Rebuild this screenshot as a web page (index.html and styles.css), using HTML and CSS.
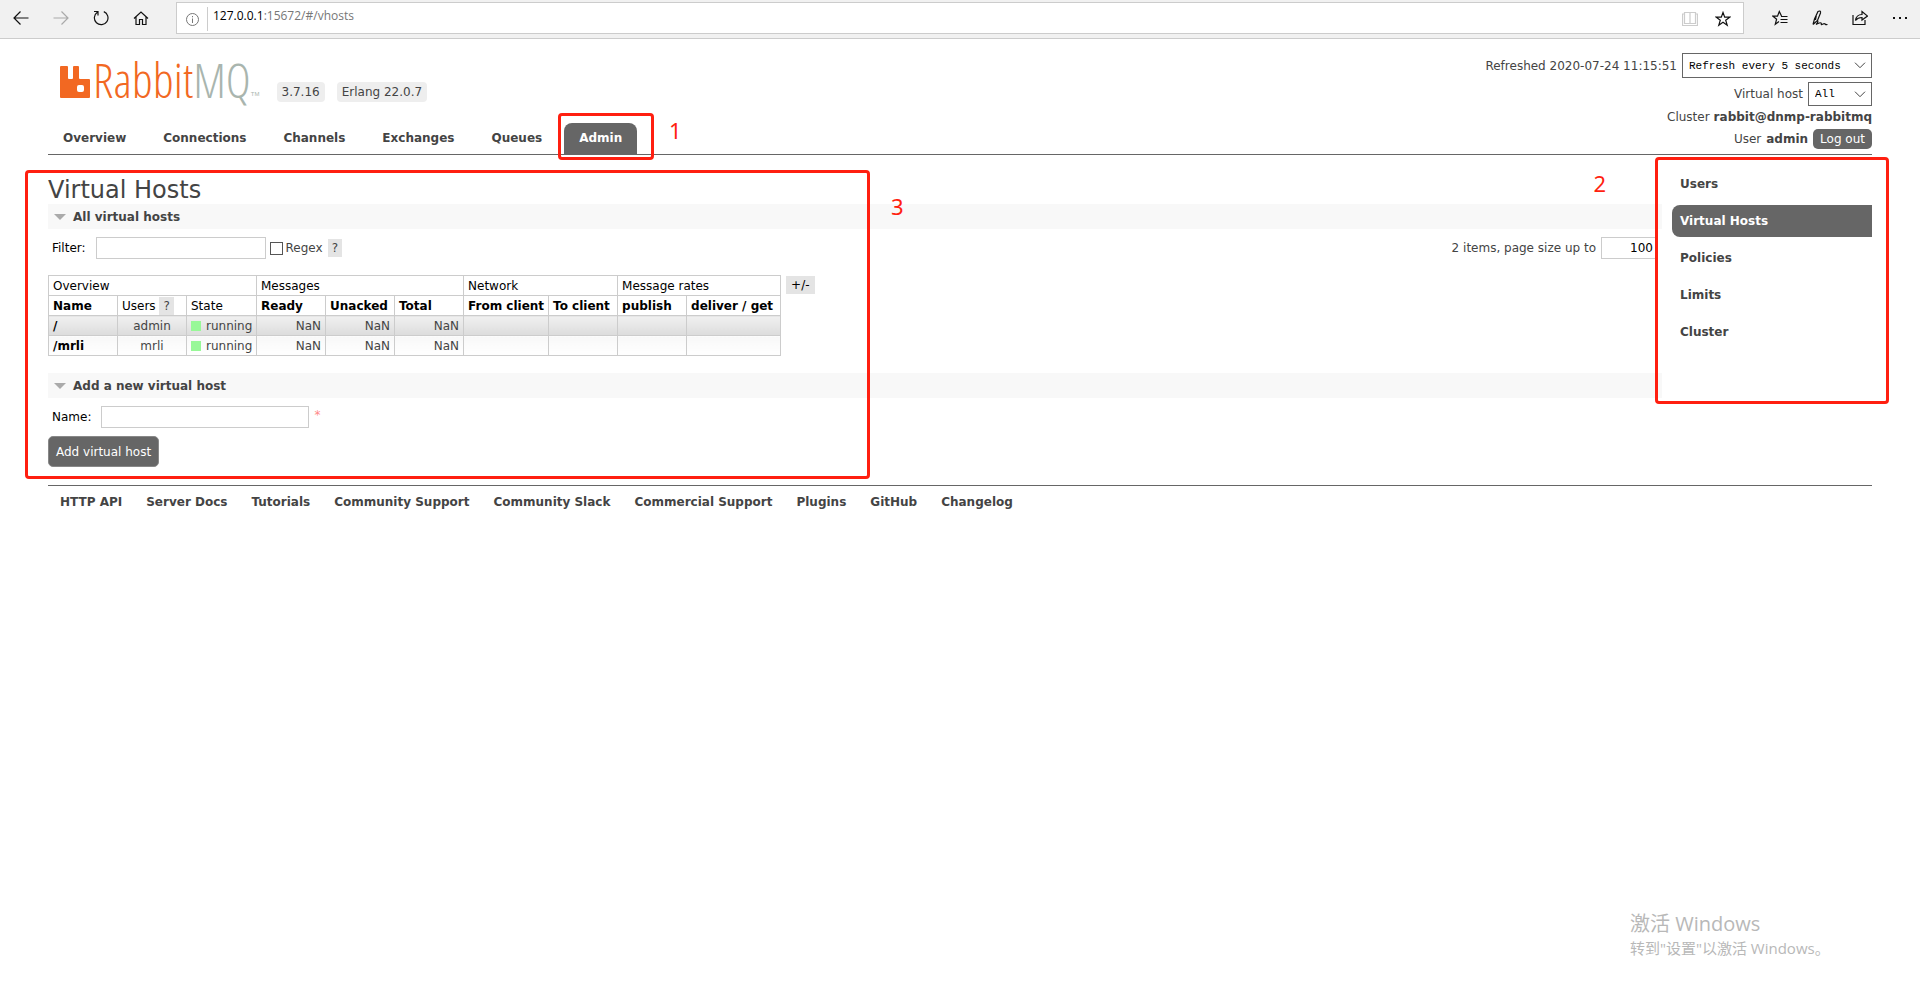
FILE: index.html
```html
<!DOCTYPE html>
<html lang="en">
<head>
<meta charset="utf-8">
<title>RabbitMQ Management</title>
<link rel="stylesheet" href="styles.css">
</head>
<body>
<div class="browser">
  <div class="browser-nav">
    <button class="icon-btn" aria-label="Back"><svg width="16" height="16" viewBox="0 0 16 16"><path d="M15.500 8H1M7.500 1.500L1 8l6.500 6.500"/></svg></button>
    <button class="icon-btn faded" aria-label="Forward"><svg width="16" height="16" viewBox="0 0 16 16"><path d="M.5 8H15M8.500 1.500L15 8l-6.500 6.500"/></svg></button>
    <button class="icon-btn" aria-label="Refresh"><svg width="16" height="16" viewBox="0 0 16 16"><path d="M10.800 1.600A6.800 6.800 0 1 1 4.300 2.300M1 1.500h4v4"/></svg></button>
    <button class="icon-btn" aria-label="Home"><svg width="16" height="16" viewBox="0 0 16 16"><path d="M1 8.500L8 2l7 6.500M3 7v7.500h3.500V9.500h3v5H13V7"/></svg></button>
  </div>
  <div class="address">
    <svg class="info" width="13" height="13" viewBox="0 0 13 13"><circle cx="6.500" cy="6.500" r="6"/><path d="M6.500 5.500v4.500M6.500 3v1.300"/></svg>
    <div class="url"><b>127.0.0.1</b>:15672/#/vhosts</div>
    <button class="icon-btn pale" aria-label="Reading view"><svg width="16" height="16" viewBox="0 0 16 16"><path d="M2.500 1.500h5.500v11H2.500zM8 1.500h5.500v11H8zM2.500 3H.5v11.500h15V3h-2"/></svg></button>
    <button class="icon-btn" aria-label="Add to favorites"><svg width="16" height="16" viewBox="0 0 16 16"><path d="M8 1.500l1.700 4.700h5L10.700 9.200l1.500 5L8 11.200l-4.200 3 1.500-5L1.300 6.200h5z"/></svg></button>
  </div>
  <div class="browser-tools">
    <button class="icon-btn" aria-label="Favorites"><svg width="16" height="16" viewBox="0 0 16 16"><path d="M9.500 6L7.300 1.500 5.500 6.200H1L4.600 9.200l-1.300 5L7 11.500M9 6.500h6.500M8.500 9.500h7M8.500 12.500h7"/></svg></button>
    <button class="icon-btn" aria-label="Notes"><svg width="16" height="16" viewBox="0 0 16 16"><path d="M1 14.500L2.500 9 6 1.500C7.500.5 9 1 8.500 3L5.500 10.500 1 14.500M4.500 4.500L3.500 10M5.500 10.500c1 .5 0 3-1.500 4 2.500-1 4-2.500 5-1.500s-.5 2 1 1.500 2-1.500 3-.5 1.500.8 2.500.5"/></svg></button>
    <button class="icon-btn" aria-label="Share"><svg width="16" height="16" viewBox="0 0 16 16"><path d="M1 5v9.500h12V10M3.500 10.500C4 7 6.500 4.500 10 4.500V1.500L15.500 6 10 10V7.500C7 7.500 5 8.500 3.500 10.500z"/></svg></button>
    <button class="icon-btn" aria-label="More"><svg width="16" height="16" viewBox="0 0 16 16"><path class="dots" d="M1 7h2v2H1zM7 7h2v2H7zM13 7h2v2h-2z"/></svg></button>
  </div>
</div>

<div class="page">
  <header class="header">
    <div class="brand-nav">
      <div class="brand">
        <a class="logo" href="#/" aria-label="RabbitMQ">
          <svg width="30" height="33" viewBox="0 0 30 33"><path fill-rule="evenodd" fill="#f26822" d="M1 1h6q1 0 1 1v11q0 1 1 1h3q1 0 1-1V2q0-1 1-1h4q1 0 1 1v11q0 1 1 1h9q1 0 1 1v17q0 1-1 1H1q-1 0-1-1V2q0-1 1-1zM19 20q-2 0-2 2v3q0 2 2 2h3q2 0 2-2v-3q0-2-2-2z"/></svg>
          <span class="wordmark">Rabbit<span class="mq">MQ</span></span><span class="tm">TM</span>
        </a>
        <span class="version">3.7.16</span>
        <span class="version">Erlang 22.0.7</span>
      </div>
      <nav class="tabs">
        <a href="#/">Overview</a>
        <a href="#/connections">Connections</a>
        <a href="#/channels">Channels</a>
        <a href="#/exchanges">Exchanges</a>
        <a href="#/queues">Queues</a>
        <a class="selected" href="#/users">Admin</a>
      </nav>
    </div>
    <div class="status">
      <div class="status-row"><label for="refresh">Refreshed 2020-07-24 11:15:51</label><select id="refresh" class="select-refresh"><option>Refresh every 5 seconds</option></select></div>
      <div class="status-row"><label for="vhost">Virtual host</label><select id="vhost" class="select-vhost"><option>All</option></select></div>
      <div class="status-row cluster">Cluster <b>rabbit@dnmp-rabbitmq</b></div>
      <div class="status-row">User <b>admin</b><button class="logout">Log out</button></div>
    </div>
  </header>

  <div class="columns">
    <main class="main">
      <h1>Virtual Hosts</h1>
      <h2>All virtual hosts</h2>
      <div class="filter">
        <label class="field-label" for="filter">Filter:</label>
        <input id="filter" class="text filter-input" type="text">
        <input id="regex" class="check" type="checkbox"><label for="regex">Regex</label>
        <button class="help">?</button>
        <div class="paging"><label for="size">2 items, page size up to</label><input id="size" class="text size-input" type="text" value="100"></div>
      </div>
      <div class="table-row">
        <table class="list">
          <colgroup><col class="c"><col class="c"><col class="c-state"><col class="c"><col class="c"><col class="c"><col class="c-from"><col class="c"><col class="c"><col class="c-get"></colgroup>
          <thead>
            <tr><th colspan="3">Overview</th><th colspan="3">Messages</th><th colspan="2">Network</th><th colspan="2">Message rates</th></tr>
            <tr><th><b>Name</b></th><th>Users <button class="help">?</button></th><th>State</th><th><b>Ready</b></th><th><b>Unacked</b></th><th><b>Total</b></th><th><b>From client</b></th><th><b>To client</b></th><th><b>publish</b></th><th><b>deliver / get</b></th></tr>
          </thead>
          <tbody>
            <tr class="alt"><td><a href="#/vhosts/%2F">/</a></td><td class="mid">admin</td><td><span class="ok"></span>running</td><td class="num">NaN</td><td class="num">NaN</td><td class="num">NaN</td><td></td><td></td><td></td><td></td></tr>
            <tr><td><a href="#/vhosts/mrli">/mrli</a></td><td class="mid">mrli</td><td><span class="ok"></span>running</td><td class="num">NaN</td><td class="num">NaN</td><td class="num">NaN</td><td></td><td></td><td></td><td></td></tr>
          </tbody>
        </table>
        <button class="help more">+/-</button>
      </div>
      <h2>Add a new virtual host</h2>
      <form class="add">
        <div class="add-row">
          <label class="field-label" for="name">Name:</label>
          <input id="name" class="text name-input" type="text">
          <span class="required">*</span>
        </div>
        <button class="submit" type="button">Add virtual host</button>
      </form>
    </main>
    <nav class="side">
      <a href="#/users">Users</a>
      <a class="selected" href="#/vhosts">Virtual Hosts</a>
      <a href="#/policies">Policies</a>
      <a href="#/limits">Limits</a>
      <a href="#/cluster-name">Cluster</a>
    </nav>
  </div>

  <footer class="footer">
    <a href="#api">HTTP API</a>
    <a href="#docs">Server Docs</a>
    <a href="#tutorials">Tutorials</a>
    <a href="#support">Community Support</a>
    <a href="#slack">Community Slack</a>
    <a href="#commercial">Commercial Support</a>
    <a href="#plugins">Plugins</a>
    <a href="#github">GitHub</a>
    <a href="#changelog">Changelog</a>
  </footer>
</div>

<div class="mark mark-tab"></div><span class="mark-no no-1">1</span>
<div class="mark mark-side"></div><span class="mark-no no-2">2</span>
<div class="mark mark-main"></div><span class="mark-no no-3">3</span>

<div class="watermark" lang="zh-CN">
  <div class="watermark-title">激活 Windows</div>
  <div>转到"设置"以激活 Windows。</div>
</div>
</body>
</html>
```
FILE: styles.css
```css
* { box-sizing: border-box; }
body {
  margin: 0;
  min-height: 100vh;
  position: relative;
  background: #fff;
  color: #444;
  font: 12px/16px "DejaVu Sans", Verdana, sans-serif;
}
a { color: #444; font-weight: bold; text-decoration: none; }
button, input, select { font: inherit; margin: 0; }
button { border: 0; padding: 0; }

/* browser bar */
.browser {
  display: flex;
  height: 39px;
  background: #f1f1f1;
  border-bottom: 1px solid #ccc;
}
.browser-nav { display: flex; gap: 24px; width: 176px; padding: 10px 0 0 13px; }
.icon-btn { width: 16px; height: 16px; background: none; display: block; }
.icon-btn svg { display: block; fill: none; stroke: #111; stroke-width: 1.2; }
.icon-btn.faded svg { stroke: #aaa; }
.icon-btn.pale svg { stroke: #ccc; }
.icon-btn .dots { fill: #111; stroke: none; }
.address {
  flex: 1;
  display: flex;
  gap: 17px;
  height: 32px;
  margin-top: 2px;
  padding: 8px 12px 0 9px;
  background: #fff;
  border: 1px solid #ccc;
}
.info { fill: none; stroke: #777; margin-top: 2px; }
.url {
  flex: 1;
  height: 24px;
  margin: -4px 0 0 -9px;
  padding-left: 5px;
  border-left: 1px solid #ccc;
  color: #777;
  font: 12px/18px "Open Sans", "Noto Sans", sans-serif;
}
.url b { color: #000; font-weight: normal; }
.browser-tools { display: flex; gap: 24px; width: 176px; padding: 10px 0 0 28px; }

/* header */
.page { padding: 14px 48px 0; }
.header {
  display: flex;
  justify-content: space-between;
  border-bottom: 1px solid #666;
}
.brand-nav { display: flex; flex-direction: column; justify-content: space-between; }
.brand { display: flex; align-items: flex-end; gap: 12px; height: 51px; padding: 0 0 2px 12px; }
.logo { display: flex; align-items: flex-end; height: 38px; margin: 0 5px 4px 0; font-weight: normal; }
.wordmark {
  margin-left: 3px;
  color: #f26822;
  font: 48px/36px "Open Sans Condensed Light", "Roboto Condensed Light", "Liberation Sans Narrow", "DejaVu Sans Condensed", sans-serif;
}
.mq { color: #a9b5ae; }
.tm { color: #a9b5ae; font: 6px/8px "Liberation Sans", sans-serif; }
.version { padding: 2px 5px; background: #eee; border-radius: 4px; line-height: 16px; }
.tabs { display: flex; gap: 7px; }
.tabs a { padding: 7px 15px 8px; border-radius: 8px 8px 0 0; }
.tabs .selected { background: #666; color: #fff; }
.status { display: flex; flex-direction: column; gap: 4px; padding-bottom: 5px; }
.status-row { display: flex; justify-content: flex-end; align-items: center; gap: 5px; }
.status-row.cluster { gap: 4px; line-height: 15px; }
select {
  appearance: none;
  padding: 0 6px;
  border: 1px solid #666;
  border-radius: 0;
  color: #000;
  font: 11px/16px "Liberation Mono", monospace;
  background: #fff url("data:image/svg+xml,%3Csvg xmlns='http://www.w3.org/2000/svg' width='12' height='7' viewBox='0 0 12 7'%3E%3Cpath d='M1 .7l5 5 5-5' fill='none' stroke='%23444' stroke-width='1'/%3E%3C/svg%3E") no-repeat right 5px center;
}
.select-refresh { width: 190px; height: 25px; }
.select-vhost { width: 64px; height: 24px; }
.logout { height: 20px; padding: 0 7px; border-radius: 5px; background: #666; color: #fff; }

/* content */
.columns { display: flex; gap: 10px; }
.main { flex: 1; padding-top: 21px; }
h1 { margin: 0; font: 24px/28px "DejaVu Sans", Verdana, sans-serif; }
h2 {
  display: flex;
  align-items: center;
  margin: 0;
  height: 25px;
  padding-left: 6px;
  background: #f8f8f8;
  font-size: 12px;
}
h2::before {
  content: "";
  margin-right: 7px;
  border: 6px solid transparent;
  border-top-color: #aaa;
  border-bottom: 0;
}
.field-label { color: #000; }
.text { height: 22px; padding: 0 6px; border: 1px solid #ccc; background: #fff; color: #000; }
.filter { display: flex; align-items: center; height: 38px; padding-left: 4px; }
.filter-input { width: 170px; margin: 0 4px 0 10px; }
.check {
  appearance: none;
  width: 13px;
  height: 13px;
  margin-right: 3px;
  border: 1px solid #555;
  background: #fff;
}
.help { padding: 0 4px; height: 18px; background: #e4e4e4; color: #444; }
.filter .help { margin-left: 5px; }
.paging { display: flex; align-items: center; gap: 5px; margin: 0 5px 0 auto; }
.size-input { width: 56px; padding: 0 3px; text-align: right; }
.table-row { display: flex; align-items: flex-start; gap: 5px; padding: 8px 0 17px; }
.list { width: 732px; table-layout: fixed; border-collapse: collapse; }
.c { width: 69px; }
.c-state { width: 70px; }
.c-from { width: 85px; }
.c-get { width: 94px; }
.list th, .list td { height: 20px; padding: 0 4px; border: 1px solid #ccc; text-align: left; white-space: nowrap; line-height: 18px; }
.list th { color: #000; font-weight: normal; }
.list td a { color: #000; }
.list td { background: linear-gradient(#f8f8f8, #fff); }
.list .alt td { background: linear-gradient(#f0f0f0, #dcdcdc); }
.list .mid { text-align: center; }
.list .num { text-align: right; }
.ok { display: inline-block; width: 10px; height: 10px; margin-right: 5px; background: #98f898; vertical-align: -1px; }
.more { margin-top: 1px; padding: 0 5px; color: #000; }
.add-row { display: flex; align-items: center; height: 38px; padding-left: 4px; }
.name-input { width: 208px; margin: 0 5px 0 10px; }
.required { color: #f88; height: 20px; }
.submit { height: 31px; padding: 0 7px; border: 1px solid #888; border-radius: 5px; background: #666; color: #fff; }

.side { width: 200px; padding-top: 13px; display: flex; flex-direction: column; gap: 5px; }
.side a { padding: 8px; }
.side .selected { background: #666; color: #fff; border-radius: 8px 0 0 8px; }

.footer { display: flex; gap: 24px; margin-top: 18px; padding: 8px 12px; border-top: 1px solid #666; }

/* numbered callouts over the page */
.mark { position: absolute; border: 3px solid #ff1f10; border-radius: 4px; pointer-events: none; }
.mark-tab { left: 558px; top: 113px; width: 96px; height: 47px; }
.mark-side { right: 31px; top: 157px; width: 234px; height: 247px; }
.mark-main { left: 25px; top: 170px; width: 845px; height: 309px; }
.mark-no { position: absolute; color: #ff1f10; font: 22px/24px "Noto Sans", sans-serif; }
.no-1 { left: 669px; top: 118px; }
.no-2 { right: 314px; top: 171px; }
.no-3 { left: 891px; top: 194px; }

.watermark {
  position: absolute;
  right: 92px;
  bottom: 46px;
  width: 198px;
  color: #b8b8b8;
  font: 15px/24px "Open Sans", "Noto Sans CJK SC", sans-serif;
  white-space: nowrap;
}
.watermark-title { font-size: 20px; }
```
